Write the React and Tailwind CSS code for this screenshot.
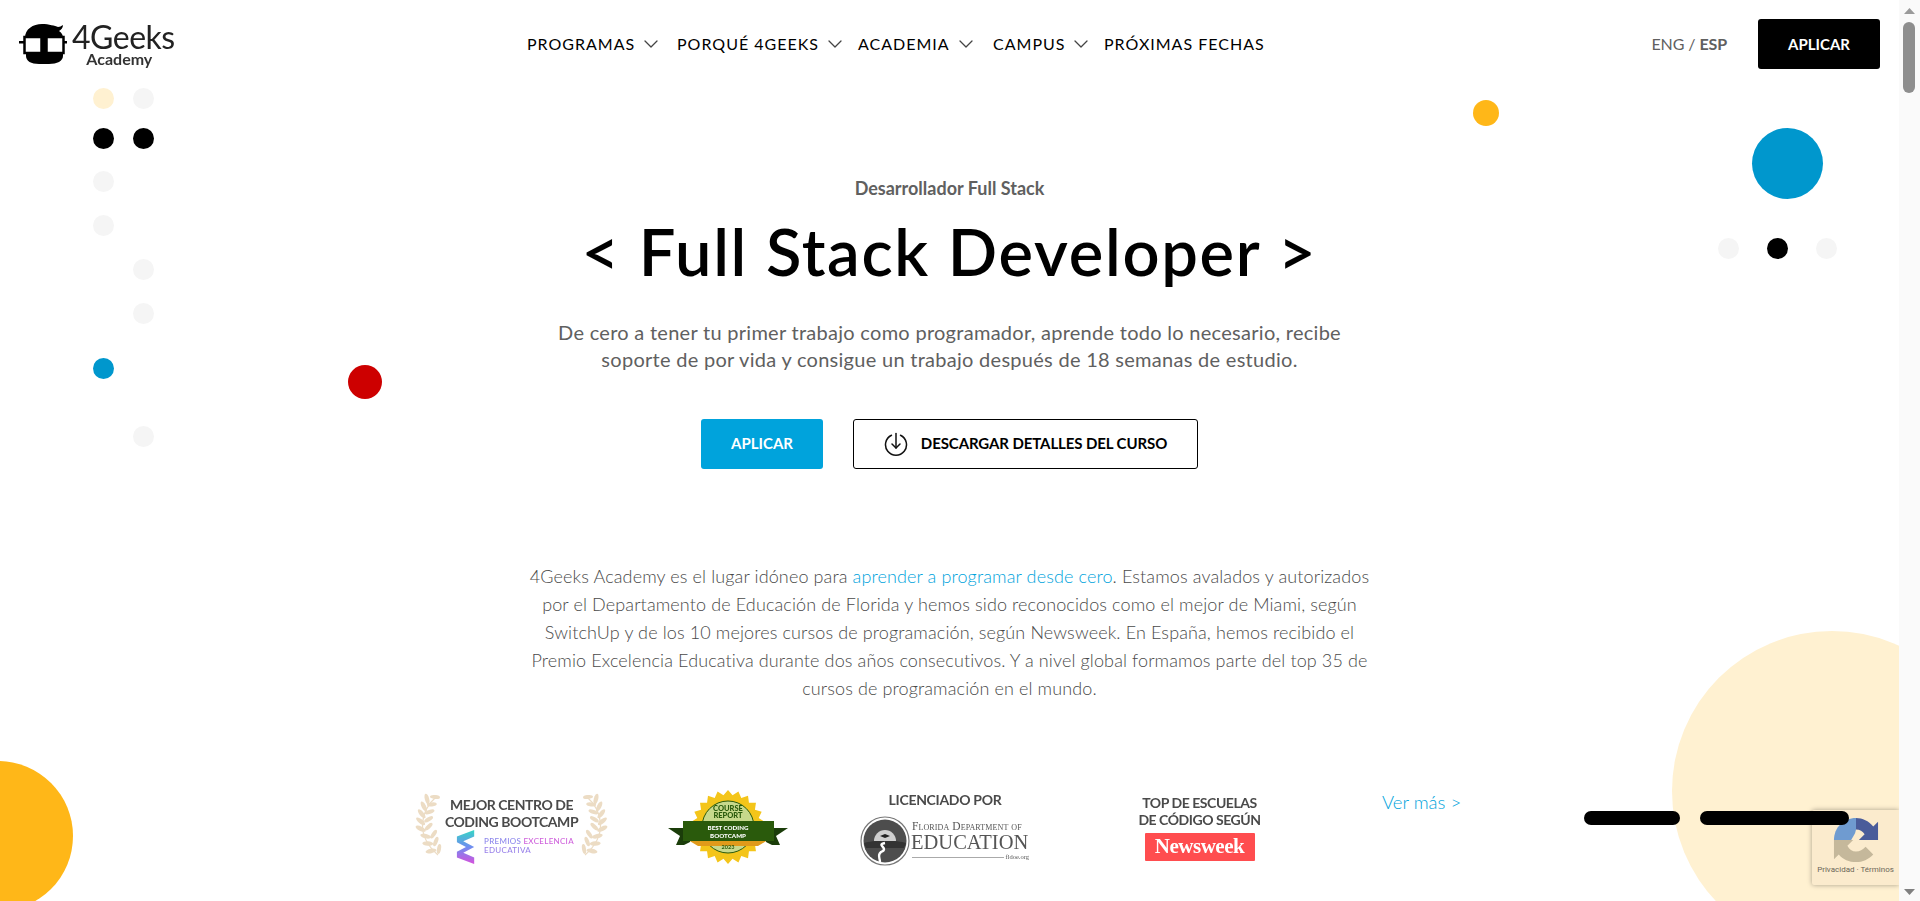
import { ChevronDown } from "lucide-react";

const NAV_ITEMS = [
  { label: "PROGRAMAS", width: "w-[150px]", arrow: true },
  { label: "PORQUÉ 4GEEKS", width: "w-[181px]", arrow: true },
  { label: "ACADEMIA", width: "w-[135px]", arrow: true },
  { label: "CAMPUS", width: "w-[111px]", arrow: true },
  { label: "PRÓXIMAS FECHAS", width: "", arrow: false },
];

// decorative dots: left column pair, then the right hand group
const DOTS = [
  { cls: "left-[93px] top-[88px] bg-[#fff1d1]" },
  { cls: "left-[133px] top-[88px] bg-[#f5f5f5]" },
  { cls: "left-[93px] top-[128px] bg-black" },
  { cls: "left-[133px] top-[128px] bg-black" },
  { cls: "left-[93px] top-[171px] bg-[#f5f5f5]" },
  { cls: "left-[93px] top-[215px] bg-[#f5f5f5]" },
  { cls: "left-[133px] top-[259px] bg-[#f5f5f5]" },
  { cls: "left-[133px] top-[303px] bg-[#f5f5f5]" },
  { cls: "left-[93px] top-[358px] bg-[#0097cd]" },
  { cls: "left-[133px] top-[426px] bg-[#f5f5f5]" },
  { cls: "left-[1718px] top-[238px] bg-[#f5f5f5]" },
  { cls: "left-[1767px] top-[238px] bg-black" },
  { cls: "left-[1816px] top-[238px] bg-[#f5f5f5]" },
];

function Logo() {
  return (
    <div className="flex items-start blur-[0.3px]">
      <svg width="48" height="42" viewBox="0 0 48 42" className="mt-[1px] shrink-0">
        <path d="M6 14C6 5 14 0 23 0C30 0 36 2 39 3C41 3 42 2 44 1C44 4 42 6 40 7C43 9 44 11 44 14Z" fill="#000" />
        <path d="M7 28H44V32C44 37 38 40 30 40H20C12 40 7 37 7 32Z" fill="#000" />
        <rect x="0" y="17" width="5" height="2.5" fill="#000" />
        <rect x="44" y="17" width="4" height="2.5" fill="#000" />
        <rect x="5.5" y="13" width="17" height="16" fill="#fff" stroke="#000" strokeWidth="2.5" />
        <rect x="27.5" y="13" width="17" height="16" fill="#fff" stroke="#000" strokeWidth="2.5" />
        <rect x="22" y="13" width="6" height="16" fill="#000" />
      </svg>
      <div className="ml-[5px] flex flex-col items-center">
        <span className="text-[32px] leading-[28px] tracking-[-0.5px] text-[#222]">4Geeks</span>
        <span className="mr-[8px] text-[16px] leading-[15px] font-bold text-[#333]">Academy</span>
      </div>
    </div>
  );
}

function Laurel({ flip }) {
  const leaves = [0, 1, 2, 3, 4, 5, 6, 7];
  return (
    <svg width="34" height="66" viewBox="0 0 34 66" className={flip ? "-scale-x-100" : ""}>
      <path d="M25 3C8 18 3 42 26 62" fill="none" stroke="#ecdcc4" strokeWidth="1.2" />
      {leaves.map((i) => {
        const t = i / 7;
        const x = 19 - 26 * t + 26 * t * t + (i > 4 ? 4 : 0);
        const y = 6 + t * 52;
        const rot = 40 - t * 85;
        return (
          <g key={i}>
            <ellipse cx={x - 4} cy={y} rx="5.5" ry="2.2" fill="#ecdcc4" transform={`rotate(${rot + 35} ${x - 4} ${y})`} />
            <ellipse cx={x + 4} cy={y - 2} rx="5" ry="2" fill="#ecdcc4" transform={`rotate(${rot - 35} ${x + 4} ${y - 2})`} />
          </g>
        );
      })}
    </svg>
  );
}

function PremiosBadge() {
  return (
    <div className="relative w-[191px] h-[84px] ml-[416px] shrink-0 blur-[0.3px]">
      <div className="absolute -left-[4px] top-[4px]"><Laurel /></div>
      <div className="absolute -right-[4px] top-[4px]"><Laurel flip /></div>
      <div className="flex flex-col items-center pt-[7px] text-[14px] leading-[17px] font-bold tracking-[-0.45px] text-[#4a4a4a]">
        <span>MEJOR CENTRO DE</span>
        <span>CODING BOOTCAMP</span>
      </div>
      <svg width="20" height="36" viewBox="0 0 22 38" preserveAspectRatio="none" className="absolute left-[40px] top-[40px]">
        <defs>
          <linearGradient id="premiosRibbon" x1="0" y1="0" x2="0" y2="1">
            <stop offset="0" stopColor="#34d6c4" />
            <stop offset="0.5" stopColor="#6f8df0" />
            <stop offset="1" stopColor="#d651dc" />
          </linearGradient>
        </defs>
        <path d="M20 1V8L8 13L20 19L8 25L20 30V37L1 30V24L11 19L1 14V8Z" fill="url(#premiosRibbon)" />
      </svg>
      <div className="absolute left-[68px] top-[48px] text-[8px] leading-[9px] font-medium tracking-[0.3px]">
        <div className="whitespace-nowrap"><span className="text-[#8d87ec]">PREMIOS </span><span className="text-[#cf62dc]">EXCELENCIA</span></div>
        <div className="text-[#9a83ea]">EDUCATIVA</div>
      </div>
    </div>
  );
}

function CourseReportBadge() {
  const points = [];
  for (let i = 0; i < 44; i++) {
    const r = i % 2 === 0 ? 37 : 32;
    const a = (i / 44) * Math.PI * 2;
    points.push(`${60 + r * Math.sin(a)},${37 - r * Math.cos(a)}`);
  }
  return (
    <svg width="120" height="76" viewBox="0 0 120 76" className="ml-[61px] shrink-0 mt-[1px] blur-[0.3px]">
      <polygon points={points.join(" ")} fill="#f4c51a" />
      <circle cx="60" cy="37" r="26" fill="#c7d98c" stroke="#2a5a0c" strokeWidth="1" />
      <path d="M0 38H22V52L16 55H8L12 46Z" fill="#1b3d0a" />
      <path d="M120 38H98V52L104 55H112L108 46Z" fill="#1b3d0a" />
      <path d="M20 50L30 56H90L100 50Z" fill="#e09a1a" />
      <rect x="15" y="31" width="91" height="20" fill="#2a5a0c" />
      <text x="60" y="21" textAnchor="middle" fontSize="7.5" fontWeight="900" fill="#2a5a0c">COURSE</text>
      <text x="60" y="27.5" textAnchor="middle" fontSize="7.5" fontWeight="900" fill="#2a5a0c">REPORT</text>
      <text x="60" y="39.5" textAnchor="middle" fontSize="6.2" fontWeight="900" fill="#fff">BEST CODING</text>
      <text x="60" y="47.5" textAnchor="middle" fontSize="6.2" fontWeight="900" fill="#fff">BOOTCAMP</text>
      <text x="60" y="59" textAnchor="middle" fontSize="5.5" fontWeight="700" fill="#2a5a0c">2023</text>
    </svg>
  );
}

function FloridaBadge() {
  return (
    <div className="w-[170px] ml-[72px] shrink-0 flex flex-col items-center blur-[0.3px]">
      <span className="text-[14px] leading-[17px] mt-[2px] font-bold tracking-[-0.3px] text-[#4a4a4a]">LICENCIADO POR</span>
      <div className="flex items-center mt-[8px] self-start">
        <svg width="50" height="50" viewBox="0 0 50 50" className="shrink-0">
          <circle cx="25" cy="25" r="24" fill="#fff" stroke="#777" strokeWidth="1.2" />
          <circle cx="25" cy="25" r="21.5" fill="#4d4d4d" />
          <path d="M4 27C12 24 38 24 46 27L44 32H6Z" fill="#333" />
          <path d="M14 25A11 11 0 0 1 36 25Z" fill="#cfcfcf" />
          <path d="M20 20L25 18L30 20L25 22Z" fill="#222" />
          <path d="M25 27C15 29 30 32 21 36C17 39 20 42 20 46" fill="none" stroke="#fff" strokeWidth="2.4" />
        </svg>
        <div className="ml-[2px] font-[Liberation_Serif,serif] text-[#555] w-[117px]">
          <div className="text-[11.5px] leading-[11px] tracking-[0.1px] whitespace-nowrap [font-variant-caps:small-caps]">Florida Department of</div>
          <div className="text-[20.5px] leading-[21px] whitespace-nowrap -ml-[1px]">EDUCATION</div>
          <div className="flex items-center text-[6.5px] leading-[8px]">
            <span className="flex-1 h-px bg-[#aaa]" />
            <span className="ml-[1px]">fldoe.org</span>
          </div>
        </div>
      </div>
    </div>
  );
}

function NewsweekBadge() {
  return (
    <div className="w-[127px] ml-[106px] shrink-0 flex flex-col items-center blur-[0.3px]">
      <div className="flex flex-col items-center text-[14px] leading-[17px] font-bold tracking-[-0.45px] text-[#4a4a4a] pt-[5px]">
        <span>TOP DE ESCUELAS</span>
        <span>DE CÓDIGO SEGÚN</span>
      </div>
      <div className="w-[110px] h-[28px] mt-[5px] flex items-center justify-center bg-[#ff4d4f] rounded-[1px] font-[Liberation_Serif,serif] text-[21px] font-bold tracking-[-0.5px] text-white">
        Newsweek
      </div>
    </div>
  );
}

function RecaptchaBadge() {
  return (
    <div className="absolute left-[1812px] top-[810px] w-[87px] h-[75px] rounded-l-[2px] bg-[#fbebcd] shadow-[0_0_5px_rgba(0,0,0,0.35)] flex flex-col items-center">
      <svg width="46" height="46" viewBox="0 0 48 48" className="mt-[7px]">
        <path d="M24 1V13L23 17L19 24H1C1 11 11 1 24 1Z" fill="#6f9bd0" />
        <path d="M24 1C31 1 37 4 42 10L47 5V24H27L33 18C31 15 28 13 24 13Z" fill="#4a5c9a" />
        <path d="M1 24H21L15 30C17 34 20 36 24 36C28 36 31 34 34 31L42 39C37 44 31 47 24 47C17 47 10 44 6 39L1 44Z" fill="#c5b89b" />
      </svg>
      <span className="text-[8px] leading-[10px] mt-[2px] text-[#6b6658] font-[Roboto,sans-serif] whitespace-nowrap">Privacidad · Términos</span>
    </div>
  );
}

function Scrollbar() {
  return (
    <div className="relative w-[21px] h-full shrink-0 bg-[#fafafa]">
      <svg width="11" height="6" viewBox="0 0 11 6" className="absolute left-[5px] top-[8px]">
        <path d="M5.5 0L11 6H0Z" fill="#9b9b9b" />
      </svg>
      <div className="absolute left-[4px] top-[22px] w-[12px] h-[71px] rounded-full bg-[#8e8e8e]" />
      <svg width="11" height="6" viewBox="0 0 11 6" className="absolute left-[5px] top-[889px]">
        <path d="M5.5 6L11 0H0Z" fill="#808080" />
      </svg>
    </div>
  );
}

export default function App() {
  return (
    <div className="flex w-full h-[901px] overflow-hidden bg-white font-[Lato,sans-serif]">
      <main className="relative flex-1 min-w-0 h-full overflow-hidden flex flex-col items-center">
        {DOTS.map((d, i) => (
          <span key={i} className={`absolute w-[21px] h-[21px] rounded-full ${d.cls}`} />
        ))}
        <span className="absolute left-[1752px] top-[128px] w-[71px] h-[71px] rounded-full bg-[#0097cd]" />
        <span className="absolute left-[1473px] top-[100px] w-[26px] h-[26px] rounded-full bg-[#ffb718]" />
        <span className="absolute left-[348px] top-[365px] w-[34px] h-[34px] rounded-full bg-[#cd0000]" />
        <span className="absolute -left-[77px] top-[761px] w-[150px] h-[150px] rounded-full bg-[#ffb718]" />
        <span className="absolute left-[1672px] top-[631px] w-[320px] h-[320px] rounded-full bg-[#fff1d1]" />

        <header className="relative z-10 w-full h-[88px] shrink-0 bg-white flex items-center pr-[19px]">
          <div className="w-[527px] shrink-0 pl-[19px]">
            <Logo />
          </div>
          <nav className="flex items-center">
            {NAV_ITEMS.map((item) => (
              <div key={item.label} className={`flex items-center gap-[4px] ${item.width}`}>
                <span className="text-[16px] leading-[24px] tracking-[1px] text-black">{item.label}</span>
                {item.arrow && <ChevronDown size={24} strokeWidth={1.3} className="text-[#444]" />}
              </div>
            ))}
          </nav>
          <div className="ml-auto text-[16px] leading-[24px] tracking-[-0.1px] text-[#606060]">
            ENG / <span className="font-bold">ESP</span>
          </div>
          <button className="ml-[31px] w-[122px] h-[50px] rounded-[3px] bg-black text-white text-[15px] font-bold">APLICAR</button>
        </header>

        <p className="relative mt-[88px] text-[18px] leading-[24px] font-bold text-[#606060]">Desarrollador Full Stack</p>
        <h1 className="relative mt-[15px] text-[65px] leading-[72px] font-semibold tracking-[1.7px] text-black">{"< Full Stack Developer >"}</h1>
        <p className="relative mt-[32px] w-[900px] text-center text-[20px] leading-[27px] tracking-[0.28px] text-[#606060]">
          De cero a tener tu primer trabajo como programador, aprende todo lo necesario, recibe
          <br />
          soporte de por vida y consigue un trabajo después de 18 semanas de estudio.
        </p>
        <div className="relative mt-[46px] flex items-center gap-[30px]">
          <button className="w-[122px] h-[50px] pb-[1px] rounded-[3px] bg-[#00a3dc] text-white text-[15px] font-bold">APLICAR</button>
          <button className="w-[345px] h-[50px] pb-[1px] rounded-[3px] border border-black bg-white flex items-center justify-center gap-[13px] text-black text-[15px] font-bold tracking-[-0.1px]">
            <svg width="24" height="24" viewBox="0 0 24 24" fill="none" stroke="#111" strokeWidth="1.5" strokeLinecap="round" strokeLinejoin="round">
              <path d="M7.5 3.2A10.5 10.5 0 1 0 16.5 3.2" />
              <path d="M12 1.5V16" />
              <path d="M8 12L12 16L16 12" />
            </svg>
            DESCARGAR DETALLES DEL CURSO
          </button>
        </div>
        <p className="relative mt-[93px] w-[880px] text-center text-[18px] leading-[28px] tracking-[0.12px] font-light text-[#4a4a4a]">
          4Geeks Academy es el lugar idóneo para <span className="text-[#00a3dc]">aprender a programar desde cero</span>. Estamos avalados y autorizados
          <br />
          por el Departamento de Educación de Florida y hemos sido reconocidos como el mejor de Miami, según
          <br />
          SwitchUp y de los 10 mejores cursos de programación, según Newsweek. En España, hemos recibido el
          <br />
          Premio Excelencia Educativa durante dos años consecutivos. Y a nivel global formamos parte del top 35 de
          <br />
          cursos de programación en el mundo.
        </p>
        <div className="relative mt-[87px] w-full flex items-start">
          <PremiosBadge />
          <CourseReportBadge />
          <FloridaBadge />
          <NewsweekBadge />
          <a className="ml-[119px] mt-[1px] shrink-0 text-[18.5px] leading-[24px] font-light text-[#00a3dc]">Ver más &gt;</a>
        </div>

        <span className="absolute left-[1584px] top-[811px] w-[96px] h-[14px] rounded-full bg-black z-20" />
        <span className="absolute left-[1700px] top-[811px] w-[149px] h-[14px] rounded-full bg-black z-20" />
        <RecaptchaBadge />
      </main>
      <Scrollbar />
    </div>
  );
}
